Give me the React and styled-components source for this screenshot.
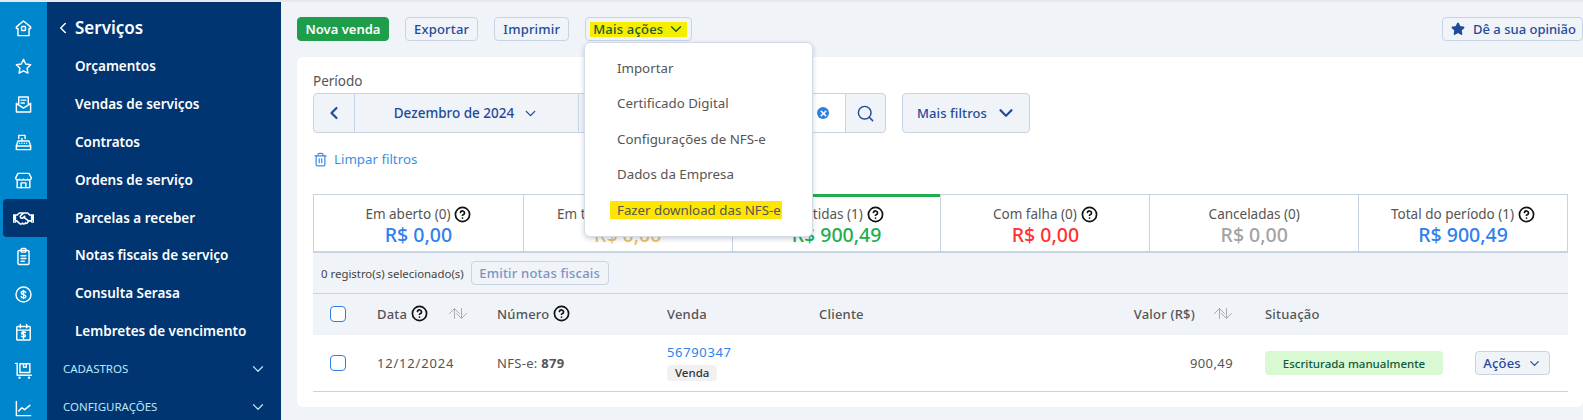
import React from 'react';
import styled, { createGlobalStyle } from 'styled-components';
import { ChevronLeft, ChevronDown, Star, Trash2, Search, CircleHelp, X, ArrowUp, ArrowDown } from 'lucide-react';
import { FaRegHandshake } from 'react-icons/fa';

const Global = createGlobalStyle`
  html, body { margin: 0; padding: 0; height: 420px; overflow: hidden; background: #f0f3f8; }
  * { box-sizing: border-box; }
  body { font-family: "Noto Sans", "Open Sans", sans-serif; color: #555; }
`;
const Page = styled.div`display: flex; width: 1583px; height: 420px; overflow: hidden; border-top: 2px solid #e6e9ee;`;
const Rail = styled.nav`width: 47px; background: #0086cd; display: flex; flex-direction: column; padding-top: 7px; flex: none;`;
const RailItem = styled.div`
  height: 38px; flex: none; display: flex; align-items: center; justify-content: center; color: #fff;
  margin-left: ${p => (p.$active ? '3px' : '0')};
  padding-right: ${p => (p.$active ? '3px' : '0')};
  background: ${p => (p.$active ? '#003572' : 'transparent')};
  border-radius: ${p => (p.$active ? '4px 0 0 4px' : '0')};
`;
const Side = styled.aside`width: 234px; background: #003572; flex: none; color: #fff; display: flex; flex-direction: column; padding-top: 7px;`;
const SideTitle = styled.div`height: 37px; margin-bottom: 1.5px; display: flex; align-items: center; font-size: 17px; font-weight: 600; padding-left: 7px; gap: 3px; flex: none;`;
const SideItem = styled.div`height: 37.8px; display: flex; align-items: center; padding-left: 28px; font-size: 13.5px; font-weight: 600; flex: none;`;
const SideGroup = styled.div`height: 38px; display: flex; align-items: center; justify-content: space-between; padding: 0 14px 0 16px; font-size: 11.5px; color: #b9e7f8; flex: none;`;
const Main = styled.main`flex: 1; min-width: 0; padding: 15px 0 0 16px;`;
const Toolbar = styled.div`display: flex; align-items: center; height: 24px; gap: 16px;`;
const Btn = styled.button`
  height: 24px; padding: 0 8px; font: 500 13px "Noto Sans", sans-serif; letter-spacing: .2px; color: #1f4a9c; background: #f0f3f8;
  border: 1px solid #c9d4e2; border-radius: 4px; display: inline-flex; align-items: center; gap: 7px; white-space: nowrap;
`;
const PrimaryBtn = styled(Btn)`background: #1e9e4a; color: #fff; border-color: #1e9e4a; width: 92px; justify-content: center; padding: 0; font-weight: 600; letter-spacing: 0;`;
const MenuBtn = styled(Btn)`width: 107px; padding: 0 4px; position: relative;`;
const Mark = styled.span`background: #f5ee00; color: #1d5a2c; height: 15px; padding: 0 2px 0 3px; width: 97px; display: flex; align-items: center; justify-content: space-between;`;
const OpinionBtn = styled(Btn)`margin-left: auto; width: 141px; padding: 0 0 0 8px; gap: 8px; letter-spacing: 0;`;
const Card = styled.section`background: #fff; margin-top: 16px; height: 350px; border-radius: 6px 0 6px 6px; padding: 16px 15px 0 16px; position: relative;`;
const FiltersRow = styled.div`display: flex; align-items: flex-end; height: 60px; gap: 16px;`;
const Field = styled.div`display: flex; flex-direction: column; gap: 3px;`;
const FieldLabel = styled.label`font-size: 13.5px; color: #555; line-height: 17px;`;
const Segmented = styled.div`display: flex; height: 40px; border: 1px solid #c9d4e2; border-radius: 4px; background: #f0f3f8; color: #1f4a9c; width: ${p => p.$w}px;`;
const Cell = styled.div`
  width: ${p => p.$w}px; flex: ${p => (p.$w ? 'none' : '1')}; display: flex; align-items: center; justify-content: center; gap: 8px;
  font-size: 13.5px; font-weight: 500; background: ${p => (p.$white ? '#fff' : 'transparent')};
  border-left: ${p => (p.$first ? 'none' : '1px solid #c9d4e2')};
`;
const ClearDot = styled.span`width: 12px; height: 12px; border-radius: 50%; background: #2f7fe0; color: #fff; display: flex; align-items: center; justify-content: center; margin-left: auto; margin-right: 16px;`;
const FilterBtn = styled(Btn)`height: 40px; width: 128px; justify-content: center; gap: 8px; font-size: 13px; letter-spacing: .1px; padding: 0 0 0 2px;`;
const ClearLink = styled.div`display: flex; align-items: center; gap: 6px; color: #3d8fe8; font-size: 13.3px; height: 20px; margin-top: 16px;`;
const Tiles = styled.div`display: grid; grid-template-columns: repeat(6, 1fr); height: 59px; margin-top: 25px; border: 1px solid #c9d4e2; border-bottom-width: 2px;`;
const Tile = styled.div`
  display: flex; flex-direction: column; align-items: center; padding-top: ${p => (p.$on ? '8px' : '10px')}; border-left: ${p => (p.$first ? 'none' : '1px solid #c9d4e2')};
  border-top: ${p => (p.$on ? '3px solid #1fae4b' : 'none')}; margin-top: ${p => (p.$on ? '-1px' : '0')};
`;
const TileLabel = styled.div`font-size: 13.5px; line-height: 18px; color: #555; display: flex; align-items: center; gap: 4px; white-space: nowrap;`;
const TileValue = styled.div`font-size: 19.5px; line-height: 24px; font-weight: 500; color: ${p => p.$c};`;
const SelBar = styled.div`height: 41px; background: #f0f3f8; display: flex; align-items: center; padding-left: 8px; gap: 7px; font-size: 11.4px; color: #444; border-bottom: 1px solid #c9d4e2;`;
const MutedBtn = styled(Btn)`color: #7b94c6; width: 138px; justify-content: center; padding: 0; height: 24px;`;
const Row = styled.div`
  display: grid; grid-template-columns: 64px 120px 170px 152px 200px 246px 210px 1fr; align-items: center;
  height: ${p => p.$h}px; background: ${p => p.$bg}; border-bottom: ${p => (p.$line ? '1px solid #c9d4e2' : 'none')};
  padding-bottom: ${p => (p.$line ? '0' : '2px')};
`;
const HeadCell = styled.div`font-size: 13px; font-weight: 500; letter-spacing: .2px; color: #555; display: flex; align-items: center; gap: 4px; justify-content: ${p => (p.$end ? 'flex-end' : 'flex-start')}; padding-right: ${p => (p.$end ? '30px' : '0')};`;
const BodyCell = styled.div`font-size: 13px; letter-spacing: ${p => (p.$end ? '.4px' : '.8px')}; color: #555; text-align: ${p => (p.$end ? 'right' : 'left')}; padding-right: ${p => (p.$end ? '32px' : '0')};`;
const NumCell = styled(BodyCell)`letter-spacing: .3px;`;
const Check = styled.span`display: block; width: 16px; height: 16px; border: 1.5px solid #2f7fe0; border-radius: 4px; margin-left: 17px; background: ${p => p.$bg || '#fff'};`;
const SortWrap = styled.span`display: inline-flex; color: #a9a9a9; margin-left: ${p => p.$gap}px; & > svg + svg { margin-left: -10px; }`;
const Link = styled.div`color: #2f80e8; font-size: 13px; line-height: 16px; letter-spacing: .65px;`;
const Tag = styled.span`display: inline-block; margin-top: 4px; background: #f1f1f1; border-radius: 4px; font-size: 11.5px; font-weight: 500; line-height: 16px; padding: 0 8px; color: #333;`;
const Status = styled.div`width: 178px; height: 24px; border-radius: 4px; background: #d9f9d3; color: #0f5a3e; font-size: 11.5px; font-weight: 500; display: flex; align-items: center; justify-content: center;`;
const ActionsBtn = styled(Btn)`width: 75px; justify-content: center; gap: 6px; padding: 0;`;
const Menu = styled.div`
  position: absolute; left: 584px; top: 42px; width: 229px; height: 195px; background: #fff; border: 1px solid #d3dbe6; border-radius: 6px;
  box-shadow: 0 2px 5px rgba(30,50,90,.22); padding: 7px 0 0 32px; z-index: 5;
`;
const MenuItem = styled.div`height: 35.5px; display: flex; align-items: center; font-size: 13.3px; color: #555;`;
const Hl = styled.span`background: #ffe600; color: #555; margin-left: -7px; padding: 1px 1px 1px 7px; line-height: 16px;`;

const Ic = ({ children, s = 19 }) => (
  <svg width={s} height={s} viewBox="0 0 24 24" fill="none" stroke="currentColor" strokeWidth="1.8" strokeLinecap="round" strokeLinejoin="round">{children}</svg>
);
const railIcons = [
  <Ic key="h"><path d="M12 2.5 3 10v2h2v9h14v-9h2v-2z" /><rect x="9.5" y="9.5" width="5" height="5" rx="1" /></Ic>,
  <Ic key="s"><path d="m12 3 2.8 5.800 6.200.900-4.500 4.400 1.100 6.300L12 17.400l-5.600 3 1.100-6.300L3 9.700l6.200-.9z" /></Ic>,
  <Ic key="m"><path d="M6 11V2.500h12V11" /><path d="M9 6.500h6M9 10h4" /><path d="M3 10.500V21.500h18V10.500l-9 6z" /></Ic>,
  <Ic key="c"><path d="M6 7V3h8v4M10 7v3" /><path d="M5 10h14l2 6v5H3v-5z" /><path d="M3 16.500h18M7 13h.01M10 13h.01M13 13h.01M16 13h.01" /></Ic>,
  <Ic key="st"><path d="M5 3h14l3 6a3 3 0 0 1-5 1.500 3.500 3.500 0 0 1-5 0 3.500 3.500 0 0 1-5 0A3 3 0 0 1 2 9z" /><path d="M4 12v9h16v-9" /><path d="M9 21v-6h6v6" /></Ic>,
  <FaRegHandshake key="ha" size={21} />,
  <Ic key="cl"><rect x="5" y="4.500" width="14" height="17.500" rx="1.500" /><rect x="9" y="2" width="6" height="4.500" rx="1" /><path d="M9 11h6M9 14.500h6M9 18h4" /></Ic>,
  <Ic key="d"><circle cx="12" cy="12" r="9.500" /><path d="M14.800 9.500c-.5-1-1.500-1.500-2.800-1.500-1.600 0-2.800.8-2.800 2 0 2.800 5.800 1.400 5.800 4.200 0 1.200-1.300 2-3 2-1.400 0-2.500-.6-3-1.600M12 7v10" /></Ic>,
  <Ic key="cal"><rect x="3.500" y="4.500" width="17" height="17" rx="1" /><path d="M3.500 9h17M8 2v4M16 2v4" /><path d="M14.500 12c-.5-.6-1.300-.9-2.500-.9-1.400 0-2.300.6-2.300 1.700 0 2.200 4.800 1 4.800 3.300 0 1.100-1 1.700-2.500 1.700-1.200 0-2.100-.4-2.600-1.200M12 10.500v9" /></Ic>,
  <Ic key="box"><path d="M2 3h2v15h18" /><rect x="7.500" y="3.500" width="12.500" height="11" /><path d="M12 3.500V8h3.500V3.500" /><circle cx="7" cy="21" r=".6" /><circle cx="19" cy="21" r=".6" /></Ic>,
  <Ic key="ch"><path d="M3 3v18h18" /><path d="m6 15 4-4 3.500 2.500L20 8" /></Ic>,
];
const items = ['Orçamentos', 'Vendas de serviços', 'Contratos', 'Ordens de serviço', 'Parcelas a receber', 'Notas fiscais de serviço', 'Consulta Serasa', 'Lembretes de vencimento'];
const Help = () => <CircleHelp size={17} color="#111" strokeWidth={2.4} />;
const Sort = ({ gap }) => <SortWrap $gap={gap}><ArrowUp size={17} strokeWidth={1.4} /><ArrowDown size={17} strokeWidth={1.4} /></SortWrap>;
const tiles = [
  ['Em aberto (0)', 'R$ 0,00', '#2f80ed', true],
  ['Em transmissão (0)', 'R$ 0,00', '#f0c060', true],
  ['Emitidas (1)', 'R$ 900,49', '#1fae4b', true, true],
  ['Com falha (0)', 'R$ 0,00', '#ff3131', true],
  ['Canceladas (0)', 'R$ 0,00', '#a3a3a3', false],
  ['Total do período (1)', 'R$ 900,49', '#2f80ed', true],
];

export default function App() {
  return (
    <Page>
      <Global />
      <Rail>
        {railIcons.map((ic, i) => <RailItem key={i} $active={i === 5}>{ic}</RailItem>)}
      </Rail>
      <Side>
        <SideTitle><ChevronLeft size={18} />Serviços</SideTitle>
        {items.map(t => <SideItem key={t}>{t}</SideItem>)}
        <SideGroup>CADASTROS<ChevronDown size={18} strokeWidth={1.6} /></SideGroup>
        <SideGroup>CONFIGURAÇÕES<ChevronDown size={18} strokeWidth={1.6} /></SideGroup>
      </Side>
      <Main>
        <Toolbar>
          <PrimaryBtn>Nova venda</PrimaryBtn>
          <Btn>Exportar</Btn>
          <Btn>Imprimir</Btn>
          <MenuBtn><Mark>Mais ações<ChevronDown size={18} strokeWidth={1.8} /></Mark></MenuBtn>
          <OpinionBtn><Star size={14} fill="currentColor" />Dê a sua opinião</OpinionBtn>
        </Toolbar>
        <Card>
          <FiltersRow>
            <Field>
              <FieldLabel>Período</FieldLabel>
              <Segmented $w={312}>
                <Cell $first $w={40}><ChevronLeft size={20} strokeWidth={2.6} /></Cell>
                <Cell $w={224}>Dezembro de 2024<ChevronDown size={17} strokeWidth={1.9} /></Cell>
                <Cell><ChevronLeft size={20} strokeWidth={2.6} style={{ transform: 'scaleX(-1)' }} /></Cell>
              </Segmented>
            </Field>
            <Field>
              <FieldLabel>Selecionado</FieldLabel>
              <Segmented $w={245}>
                <Cell $first $white>
                  <ClearDot><X size={9} strokeWidth={4} /></ClearDot>
                </Cell>
                <Cell $w={40}><Search size={19} strokeWidth={1.8} /></Cell>
              </Segmented>
            </Field>
            <FilterBtn>Mais filtros<ChevronDown size={22} strokeWidth={2.4} /></FilterBtn>
          </FiltersRow>
          <ClearLink><Trash2 size={15} />Limpar filtros</ClearLink>
          <Tiles>
            {tiles.map(([l, v, c, h, on], i) => (
              <Tile key={l} $first={i === 0} $on={on}>
                <TileLabel>{l}{h && <Help />}</TileLabel>
                <TileValue $c={c}>{v}</TileValue>
              </Tile>
            ))}
          </Tiles>
          <SelBar>0 registro(s) selecionado(s)<MutedBtn>Emitir notas fiscais</MutedBtn></SelBar>
          <Row $h={41} $bg="#f0f3f8">
            <Check $bg="#fff" />
            <HeadCell>Data <Help /><Sort gap={14} /></HeadCell>
            <HeadCell>Número <Help /></HeadCell>
            <HeadCell>Venda</HeadCell>
            <HeadCell>Cliente</HeadCell>
            <HeadCell $end>Valor (R$)<Sort gap={12} /></HeadCell>
            <HeadCell>Situação</HeadCell>
            <span />
          </Row>
          <Row $h={57} $bg="#fff" $line>
            <Check />
            <BodyCell>12/12/2024</BodyCell>
            <NumCell>NFS-e: <b>879</b></NumCell>
            <div><Link>56790347</Link><Tag>Venda</Tag></div>
            <span />
            <BodyCell $end>900,49</BodyCell>
            <Status>Escriturada manualmente</Status>
            <ActionsBtn>Ações<ChevronDown size={15} strokeWidth={1.9} /></ActionsBtn>
          </Row>
        </Card>
      </Main>
      <Menu>
        <MenuItem>Importar</MenuItem>
        <MenuItem>Certificado Digital</MenuItem>
        <MenuItem>Configurações de NFS-e</MenuItem>
        <MenuItem>Dados da Empresa</MenuItem>
        <MenuItem><Hl>Fazer download das NFS-e</Hl></MenuItem>
      </Menu>
    </Page>
  );
}
